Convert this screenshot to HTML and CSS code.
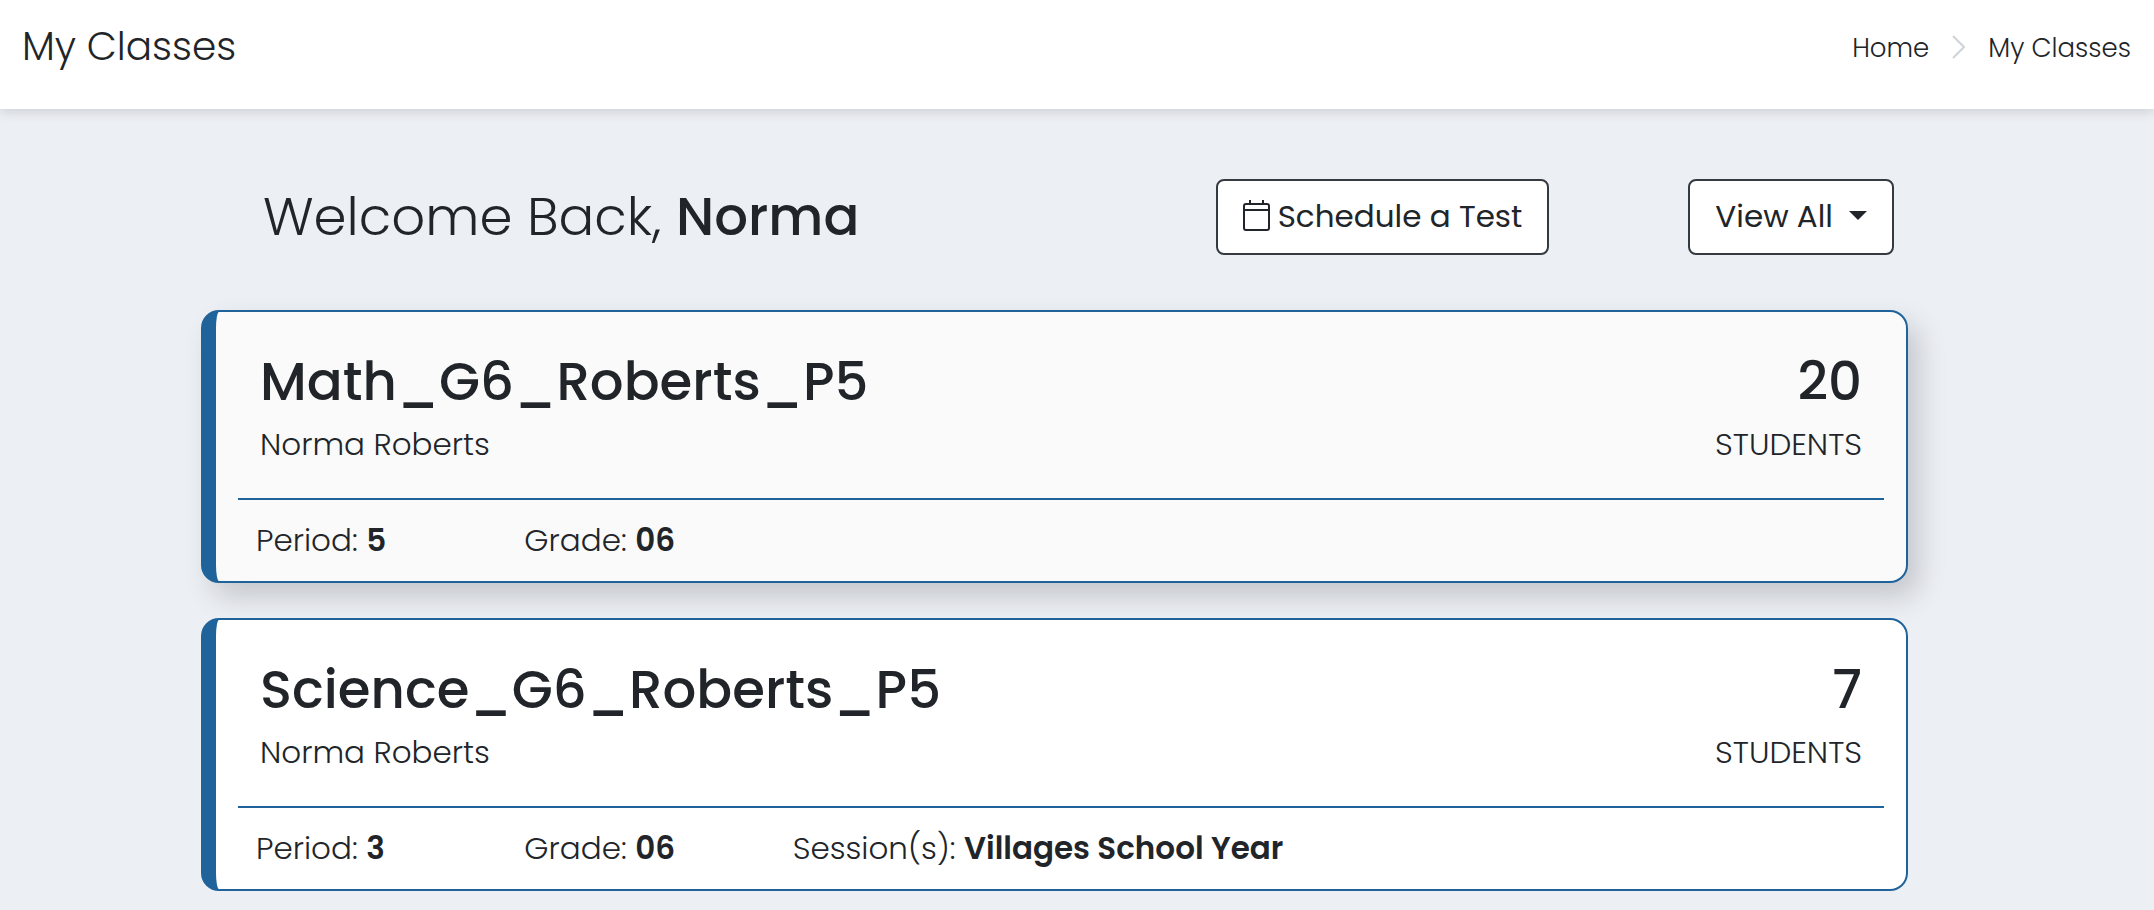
FILE: index.html
```html
<!DOCTYPE html>
<html lang="en">
<head>
    <meta charset="UTF-8">
    <meta name="viewport" content="width=device-width, initial-scale=1.0">
    <title>My Classes</title>
    <link rel="stylesheet" href="styles.css">
</head>
<body>

<!-- Page header -->
<header class="page-header">
    <h1>My Classes</h1>
    <nav class="breadcrumb" aria-label="Breadcrumb">
        <a href="#">Home</a>
        <svg class="chevron" viewBox="0 0 13 24" aria-hidden="true"><path d="M1 1l11 11L1 23"/></svg>
        <a href="#">My Classes</a>
    </nav>
</header>

<main>
    <!-- Greeting and actions -->
    <div class="toolbar">
        <h2>Welcome Back, <b>Norma</b></h2>
        <div class="actions">
            <button class="btn" type="button">
                <svg class="calendar" viewBox="0 0 27 31" aria-hidden="true">
                    <rect x="1" y="4" width="25" height="26" rx="2"/>
                    <path d="M1 10h25M7 0v4M20 0v4"/>
                </svg>
                Schedule a Test
            </button>
            <button class="btn" type="button">View All <span class="caret"></span></button>
        </div>
    </div>

    <!-- Class list -->
    <section class="class-card active">
        <div class="card-top">
            <div>
                <h3>Math_G6_Roberts_P5</h3>
                <p>Norma Roberts</p>
            </div>
            <div class="count">
                <h3>20</h3>
                <p>STUDENTS</p>
            </div>
        </div>
        <div class="card-info">
            <span>Period: <b>5</b></span>
            <span>Grade: <b>06</b></span>
        </div>
    </section>

    <section class="class-card">
        <div class="card-top">
            <div>
                <h3>Science_G6_Roberts_P5</h3>
                <p>Norma Roberts</p>
            </div>
            <div class="count">
                <h3>7</h3>
                <p>STUDENTS</p>
            </div>
        </div>
        <div class="card-info">
            <span>Period: <b>3</b></span>
            <span>Grade: <b>06</b></span>
            <span class="session">Session(s): <b>Villages School Year</b></span>
        </div>
    </section>
</main>

</body>
</html>
```
FILE: styles.css
```css
* {
    margin: 0;
    padding: 0;
    box-sizing: border-box;
}
body {
    background-color: #eceff4;
    color: #212529;
    font-family: Poppins, Inter, "Open Sans", sans-serif;
    font-size: 31px;
    font-weight: 300;
    line-height: 44px;
}
b {
    font-weight: 600;
}

/* Header */
.page-header {
    display: flex;
    align-items: center;
    justify-content: space-between;
    padding: 17px 23px 32px 22px;
    background-color: #fff;
    box-shadow: 0 2px 12px rgba(0, 0, 0, 0.15);
}
.page-header h1 {
    font-size: 39px;
    font-weight: 300;
    line-height: 60px;
}
.breadcrumb {
    display: flex;
    align-items: center;
    gap: 23px;
    padding-top: 2px;
    font-size: 26px;
}
.breadcrumb a {
    color: inherit;
    text-decoration: none;
}
.chevron {
    width: 13px;
    height: 24px;
    margin-bottom: 2px;
    fill: none;
    stroke: #ced4da;
    stroke-width: 2;
}

/* Content */
main {
    padding: 70px 246px 19px 201px;
}
.toolbar {
    display: flex;
    align-items: center;
    justify-content: space-between;
    margin-bottom: 55px;
    padding: 0 14px 0 62px;
}
.toolbar h2 {
    font-size: 53px;
    font-weight: 300;
    line-height: 76px;
}
.toolbar b {
    font-weight: 500;
}
.actions {
    display: flex;
    gap: 139px;
}
.btn {
    display: flex;
    align-items: center;
    gap: 8px;
    height: 76px;
    padding: 0 25px 2px;
    border: 2px solid #343a40;
    border-radius: 8px;
    background-color: #fff;
    color: #212529;
    font-family: inherit;
    font-size: 31px;
    font-weight: 400;
    cursor: pointer;
}
.calendar {
    width: 27px;
    height: 31px;
    margin-bottom: 2px;
    fill: none;
    stroke: #212529;
    stroke-width: 2;
}
.caret {
    margin: 0 0 2px 8px;
    border-top: 9px solid #212529;
    border-left: 9px solid transparent;
    border-right: 9px solid transparent;
}

/* Class cards */
.class-card {
    margin-bottom: 35px;
    padding: 0 22px;
    border: 2px solid #20639b;
    border-left-width: 15px;
    border-radius: 18px;
    background-color: #fff;
}
.class-card:last-child {
    margin-bottom: 0;
}
.class-card.active {
    background-color: #fafafa;
    box-shadow: 11px 14px 28px rgba(0, 0, 0, 0.17);
}
.card-top {
    display: flex;
    justify-content: space-between;
    padding: 38px 22px 32px;
    border-bottom: 2px solid #20639b;
}
.class-card h3 {
    font-size: 53px;
    font-weight: 500;
    line-height: 64px;
}
.class-card p {
    margin-top: 8px;
}
.count {
    text-align: right;
}
.card-info {
    display: grid;
    grid-template-columns: repeat(6, 1fr);
    padding: 18px 18px 19px;
}
.session {
    grid-column: span 4;
}
```
